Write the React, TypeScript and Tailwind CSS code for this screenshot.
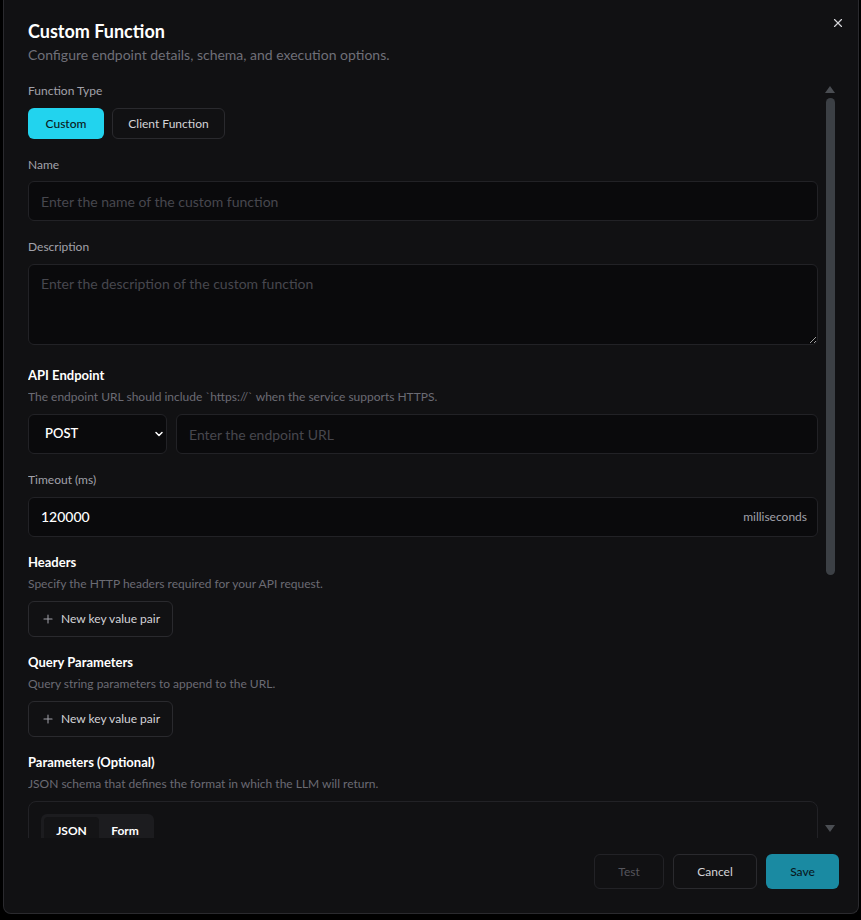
import { ChevronDown, Plus, X } from "lucide-react";

function FieldLabel({ children, className = "" }: { children: React.ReactNode; className?: string }) {
  return <label className={`block text-xs leading-4 text-[#a1a1aa] ${className}`}>{children}</label>;
}

function SectionTitle({ title, hint, className = "" }: { title: string; hint: string; className?: string }) {
  return (
    <div className={className}>
      <h3 className="text-[13px] leading-5 font-bold text-white">{title}</h3>
      <p className="mt-1 text-xs leading-4 text-[#6b6b73]">{hint}</p>
    </div>
  );
}

function KeyValueButton() {
  return (
    <button className="mt-[9px] flex h-[36px] w-[145px] items-center gap-[6px] whitespace-nowrap rounded-md border border-[#2a2a2e] pl-[12px] text-xs text-[#d4d4d8]">
      <Plus className="h-[14px] w-[14px] shrink-0 text-[#a1a1aa]" strokeWidth={1.75} />
      New key value pair
    </button>
  );
}

export default function App() {
  const inputCls =
    "block w-full rounded-md border border-[#222226] bg-[#0a0a0c] px-3 text-sm text-white placeholder:text-[#47474e] outline-none";

  return (
    <div className="min-h-screen bg-black font-['Lato','Inter',sans-serif] [color-scheme:dark]">
      <div className="ml-[3px] flex h-[914px] w-[856px] flex-col rounded-b-lg border-x border-b border-[#2a2a2e] bg-[#111113] pb-[24px] pl-[24px] pr-[19px] pt-[17px]">
        {/* Header */}
        <div className="relative">
          <h2 className="text-lg leading-7 font-bold text-white">Custom Function</h2>
          <p className="text-sm leading-5 text-[#6f6f78]">Configure endpoint details, schema, and execution options.</p>
          <button className="absolute right-[-6px] top-[-1px] text-[#d4d4d8]">
            <X className="h-[14px] w-[14px]" strokeWidth={2} />
          </button>
        </div>

        {/* Scrollable body */}
        <div className="mt-[18px] flex min-h-0 flex-1 gap-[7px]">
          <div className="w-[790px] overflow-hidden">
            <FieldLabel>Function Type</FieldLabel>
            <div className="mt-[9px] flex gap-2">
              <button className="h-[31px] w-[76px] rounded-md bg-[#22d3ee] text-xs font-medium text-[#0b1a20]">Custom</button>
              <button className="h-[31px] w-[113px] rounded-md border border-[#2a2a2e] text-xs text-[#d4d4d8]">Client Function</button>
            </div>

            <FieldLabel className="mt-[18px]">Name</FieldLabel>
            <input className={`${inputCls} mt-[8px] h-[40px]`} placeholder="Enter the name of the custom function" />

            <FieldLabel className="mt-[18px]">Description</FieldLabel>
            <textarea
              className={`${inputCls} mt-[9px] h-[81px] resize-y py-[9px]`}
              placeholder="Enter the description of the custom function"
            />

            <SectionTitle
              className="mt-[20px]"
              title="API Endpoint"
              hint="The endpoint URL should include `https://` when the service supports HTTPS."
            />
            <div className="mt-[9px] flex gap-[9px]">
              <div className="relative w-[139px] shrink-0">
                <select className="h-[40px] w-full appearance-none rounded-md border border-[#222226] bg-[#0a0a0c] pl-[16px] text-[13px] font-semibold text-white outline-none">
                  <option>POST</option>
                  <option>GET</option>
                  <option>PUT</option>
                  <option>PATCH</option>
                  <option>DELETE</option>
                </select>
                <ChevronDown
                  className="pointer-events-none absolute right-[2px] top-[14px] h-[12px] w-[12px] text-white"
                  strokeWidth={3}
                />
              </div>
              <input className={`${inputCls} h-[40px]`} placeholder="Enter the endpoint URL" />
            </div>

            <FieldLabel className="mt-[18px]">Timeout (ms)</FieldLabel>
            <div className="mt-[9px] flex h-[40px] items-center rounded-md border border-[#222226] bg-[#0a0a0c] pl-3 pr-[10px]">
              <input className="flex-1 bg-transparent text-sm font-medium text-white outline-none" defaultValue="120000" />
              <span className="text-xs text-[#a1a1aa]">milliseconds</span>
            </div>

            <SectionTitle className="mt-[15px]" title="Headers" hint="Specify the HTTP headers required for your API request." />
            <KeyValueButton />

            <SectionTitle className="mt-[15px]" title="Query Parameters" hint="Query string parameters to append to the URL." />
            <KeyValueButton />

            <SectionTitle
              className="mt-[15px]"
              title="Parameters (Optional)"
              hint="JSON schema that defines the format in which the LLM will return."
            />
            <div className="mt-[9px] rounded-lg border border-[#222226] p-3">
              <div className="inline-flex rounded-md bg-[#1c1c1f] p-[3px]">
                <button className="h-[28px] w-[55px] rounded bg-[#141416] text-xs font-bold text-white">JSON</button>
                <button className="h-[28px] w-[52px] rounded text-xs font-bold text-white">Form</button>
              </div>
              <textarea
                className={`${inputCls} mt-3 h-[220px] font-mono`}
                defaultValue={'{\n  "type": "object",\n  "properties": {}\n}'}
              />
            </div>
          </div>

          {/* Scrollbar */}
          <div className="flex w-[10px] flex-col items-center pt-[3px] pb-[6px]">
            <div className="h-0 w-0 border-x-[5px] border-b-[7px] border-x-transparent border-b-[#4a4d52]" />
            <div className="mt-[5px] h-[477px] w-[9px] rounded-full bg-[#3c4045]" />
            <div className="flex-1" />
            <div className="h-0 w-0 border-x-[5px] border-t-[7px] border-x-transparent border-t-[#4a4d52]" />
          </div>
        </div>

        {/* Footer */}
        <div className="flex justify-end gap-[9px] pt-4">
          <button className="h-[35px] w-[70px] rounded-md border border-[#222226] text-xs text-[#55555c]">Test</button>
          <button className="h-[35px] w-[84px] rounded-md border border-[#2a2a2e] text-xs text-[#d4d4d8]">Cancel</button>
          <button className="h-[35px] w-[73px] rounded-md bg-[#1a8aa2] text-xs font-medium text-[#08181d]">Save</button>
        </div>
      </div>
    </div>
  );
}
